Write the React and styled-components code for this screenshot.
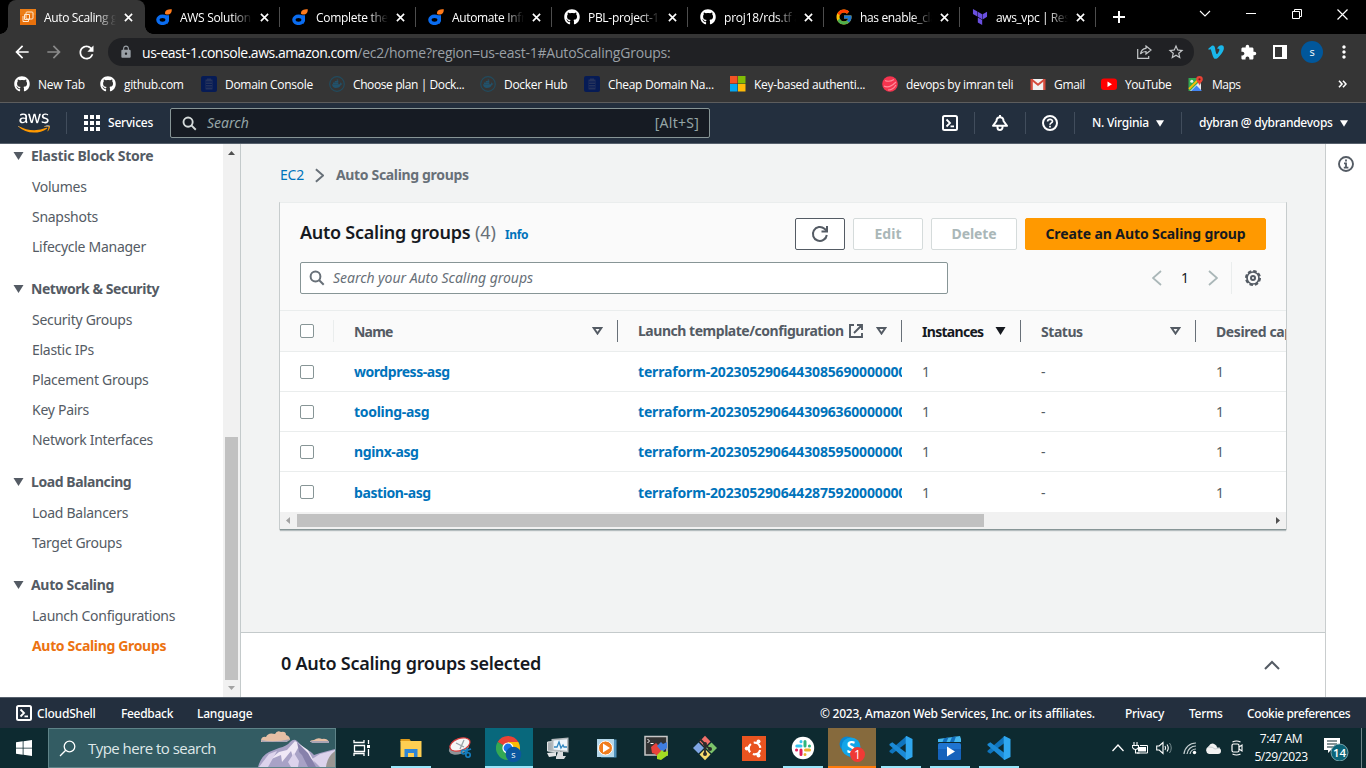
import React from "react";
import styled, { createGlobalStyle, css } from "styled-components";
import { FaGithub, FaVimeoV, FaDocker, FaAws } from "react-icons/fa";
import { FcGoogle } from "react-icons/fc";
import { SiTerraform } from "react-icons/si";
import { MdExtension, MdRefresh, MdArrowBack, MdArrowForward, MdLock, MdStarBorder, MdMoreVert } from "react-icons/md";

const ui = `"Open Sans", "Noto Sans", sans-serif`;
const ember = `"Noto Sans", "Open Sans", sans-serif`;

const GlobalStyle = createGlobalStyle`
  *, *::before, *::after { box-sizing: border-box; }
  body { margin: 0; background: #fff; overflow: hidden; }
  svg { display: block; flex: none; }
`;

const Screen = styled.div`
  width: 1366px;
  height: 768px;
  display: flex;
  flex-direction: column;
  overflow: hidden;
  font-family: ${ember};
  font-size: 14px;
`;

const Label = styled.span`
  white-space: nowrap;
  letter-spacing: ${(p) => p.$ls || 0}px;
  padding-bottom: ${(p) => p.$lift || 0}px;
`;

/* ---------- browser chrome ---------- */

const TabStrip = styled.div`
  height: 34px;
  flex: none;
  background: #000;
  padding-left: 8px;
  display: flex;
  font-family: ${ui};
  font-size: 12px;
  color: #fff;
`;

const Tab = styled.div`
  position: relative;
  width: ${(p) => (p.$active ? 137 : 136)}px;
  height: 34px;
  margin-right: ${(p) => (p.$active ? -1 : 0)}px;
  padding-left: 12px;
  display: flex;
  align-items: center;
  ${(p) =>
    p.$active &&
    css`
      background: #353535;
      border-radius: 8px 8px 0 0;
      &::before, &::after {
        content: "";
        position: absolute;
        bottom: 0;
        width: 8px;
        height: 8px;
      }
      &::before { left: -8px; background: radial-gradient(circle at 0 0, transparent 7.5px, #353535 8px); }
      &::after { right: -8px; background: radial-gradient(circle at 100% 0, transparent 7.5px, #353535 8px); }
    `}
`;

const TabTitle = styled.div`
  width: 72px;
  margin: 0 8px;
  overflow: hidden;
  white-space: nowrap;
  letter-spacing: ${(p) => p.$ls || 0}px;
  mask-image: linear-gradient(90deg, #000 72%, transparent 100%);
`;

const TabEdge = styled.i`
  width: 1px;
  height: 20px;
  margin-left: auto;
  background: #4d4d4d;
`;

const NewTab = styled.div`
  width: 45px;
  display: flex;
  align-items: center;
  justify-content: center;
`;

const WindowButtons = styled.div`
  margin-left: auto;
  height: 28px;
  display: flex;
  align-items: center;
  svg { margin: 0 15px; }
`;

const Toolbar = styled.div`
  height: 36px;
  flex: none;
  background: #353535;
  display: flex;
  align-items: center;
  padding: 0 6px;
  font-family: ${ui};
`;

const ToolSlot = styled.div`
  width: 32px;
  height: 32px;
  display: flex;
  align-items: center;
  justify-content: center;
  color: ${(p) => (p.$dim ? "#8a8a8a" : "#fff")};
`;

const AddressBar = styled.div`
  width: 1086px;
  height: 28px;
  margin: 0 6px;
  border-radius: 14px;
  background: #202124;
  display: flex;
  align-items: center;
  padding: 0 2px 0 11px;
  color: #fff;
  font-size: 14px;
`;

const Url = styled.div`
  flex: 1;
  margin-left: 9px;
  white-space: nowrap;
  span { color: #9aa0a6; letter-spacing: -0.22px; }
  b { font-weight: 400; letter-spacing: -0.46px; }
`;

const Avatar = styled.div`
  width: 22px;
  height: 22px;
  border-radius: 50%;
  background: #01579b;
  color: #fff;
  font: 11px/22px ${ui};
  text-align: center;
`;

const Bookmarks = styled.div`
  height: 33px;
  flex: none;
  background: #353535;
  border-bottom: 1px solid #5d5d5d;
  display: flex;
  align-items: flex-start;
  padding-left: 14px;
  font-family: ${ui};
  font-size: 12px;
  color: #fff;
`;

const Bookmark = styled.div`
  width: ${(p) => p.$w}px;
  height: 28px;
  display: flex;
  align-items: center;
  gap: 8px;
  letter-spacing: ${(p) => p.$ls}px;
  white-space: nowrap;
`;

/* ---------- console header ---------- */

const AwsBar = styled.header`
  height: 41px;
  flex: none;
  background: #232f3e;
  border-bottom: 1px solid #56606c;
  display: flex;
  align-items: center;
  padding-left: 18px;
  font-size: 12px;
  font-weight: 500;
  color: #fff;
`;

const LogoBox = styled.div`
  position: relative;
  width: 32px;
  height: 26px;
  svg { position: absolute; left: 0; top: 0; width: 32px; height: 26px; }
  svg:first-child { clip-path: inset(0 0 9.5px 0); }
  svg:last-child { clip-path: inset(16.5px 0 0 0); color: #f90; }
`;

const BarDivider = styled.i`
  width: 1px;
  height: 22px;
  background: #414d5c;
`;

const Services = styled.div`
  width: 103px;
  padding-left: 17px;
  display: flex;
  align-items: center;
  gap: 8px;
`;

const GlobalSearch = styled.div`
  width: 540px;
  height: 30px;
  border: 1px solid #879596;
  border-radius: 2px;
  background: #161b23;
  display: flex;
  align-items: center;
  padding: 0 10px 0 11px;
  font-weight: 400;
  font-size: 14px;
  color: #95a5a6;
  em { flex: 1; margin-left: 10px; padding-bottom: 2px; }
`;

const HeaderIcons = styled.div`
  margin-left: 215px;
  display: flex;
  align-items: center;
`;

const HeaderSlot = styled.div`
  width: ${(p) => p.$w}px;
  display: flex;
  justify-content: center;
`;

const HeaderMenu = styled.div`
  width: ${(p) => p.$w}px;
  padding-left: 17px;
  display: flex;
  align-items: center;
  gap: 7px;
`;

/* ---------- body ---------- */

const Body = styled.div`
  height: 553px;
  flex: none;
  display: flex;
`;

const Sidebar = styled.nav`
  width: 223px;
  color: #545b64;
  background: #fff;
`;

const NavGroup = styled.section`
  margin-bottom: 15px;
`;

const NavHeading = styled.div`
  height: 24px;
  margin-bottom: 4px;
  padding-left: 13px;
  display: flex;
  align-items: center;
  gap: 7px;
  font-weight: 700;
`;

const NavItem = styled.div`
  height: 30px;
  line-height: 30px;
  padding-left: 32px;
  white-space: nowrap;
  font-weight: ${(p) => (p.$active ? 700 : 400)};
  color: ${(p) => (p.$active ? "#ec7211" : "#545b64")};
  letter-spacing: ${(p) => (p.$active ? -0.33 : -0.28)}px;
`;

const VScroll = styled.div`
  width: 18px;
  border-right: 1px solid #c4cacb;
  background: #f1f1f1;
  display: flex;
  flex-direction: column;
  align-items: center;
  padding: 7px 0;
`;

const VThumb = styled.div`
  width: 13px;
  height: 243px;
  margin-top: auto;
  margin-bottom: 6px;
  background: #c1c1c1;
`;

const Main = styled.main`
  width: 1085px;
  display: flex;
  flex-direction: column;
  border-right: 1px solid #c9cdce;
  background: #f2f3f3;
`;

const Content = styled.div`
  height: 488px;
  padding: 17px 39px 0;
`;

const Crumbs = styled.div`
  height: 28px;
  display: flex;
  align-items: center;
  color: #687078;
  font-weight: 700;
  svg { margin: 0 12px 0 10px; }
  a { color: #0073bb; font-weight: 400; width: 25px; padding-bottom: 2px; letter-spacing: -0.2px; }
`;

const Card = styled.section`
  width: 1006px;
  height: 328px;
  margin-top: 13px;
  background: #fff;
  border-top: 1px solid #eaeded;
  border-bottom: 1px solid #879596;
  box-shadow: 0 1px 1px rgba(0, 28, 36, 0.25), 1px 0 0 #d0d5d6, -1px 0 0 #d0d5d6;
  overflow: hidden;
`;

const CardHead = styled.div`
  height: 107px;
  padding: 15px 20px 0;
  background: #fafafa;
`;

const HeadRow = styled.div`
  display: flex;
  align-items: center;
  height: 32px;
  margin-bottom: 12px;
`;

const Title = styled.h1`
  margin: 0 5px 4px 0;
  width: 170px;
  white-space: nowrap;
  font-size: 18px;
  font-weight: 600;
  color: #16191f;
  letter-spacing: -0.26px;
`;

const Count = styled.span`
  width: 30px;
  margin-bottom: 4px;
  font-size: 18px;
  color: #687078;
  letter-spacing: -0.1px;
`;

const InfoLink = styled.a`
  flex: 1;
  font-size: 12px;
  font-weight: 700;
  color: #0073bb;
  letter-spacing: -0.35px;
`;

const Button = styled.button`
  width: ${(p) => p.$w}px;
  height: 32px;
  margin-left: 8px;
  padding: 0 0 2px;
  display: flex;
  align-items: center;
  justify-content: center;
  border: 1px solid ${(p) => (p.$primary ? "#f90" : p.disabled ? "#d5dbdb" : "#545b64")};
  border-radius: 2px;
  background: ${(p) => (p.$primary ? "#f90" : "#fff")};
  color: ${(p) => (p.$primary ? "#16191f" : p.disabled ? "#aab7b8" : "#545b64")};
  font: 700 14px ${ember};
  letter-spacing: ${(p) => p.$ls || 0}px;
  white-space: nowrap;
  svg { margin-top: 2px; }
`;

const FilterBox = styled.div`
  width: 648px;
  height: 32px;
  padding-left: 8px;
  display: flex;
  align-items: center;
  gap: 8px;
  border: 1px solid #879596;
  border-radius: 2px;
  background: #fff;
  color: #687078;
  font-style: italic;
`;

const Pager = styled.div`
  margin-left: auto;
  height: 32px;
  width: 114px;
  display: flex;
  align-items: center;
  color: #16191f;
  span { width: 46px; text-align: center; padding-bottom: 1px; }
`;

const GearSlot = styled.div`
  margin-left: 13px;
  padding-left: 13px;
  height: 32px;
  border-left: 1px solid #eaeded;
  display: flex;
  align-items: center;
`;

const columns = "54px 284px 284px 119px 175px 190px";

const HeaderLine = styled.div`
  height: 42px;
  display: grid;
  grid-template-columns: ${columns};
  align-items: center;
  border-top: 1px solid #eaeded;
  border-bottom: 1px solid #eaeded;
  background: #fafafa;
  color: #545b64;
  font-weight: 700;
`;

const HeadCell = styled.div`
  height: 22px;
  padding: 0 14px 0 20px;
  display: flex;
  align-items: center;
  border-right: 1px solid ${(p) => (p.$light ? "#eaeded" : "#687078")};
  color: ${(p) => (p.$sorted ? "#16191f" : "#545b64")};
  white-space: nowrap;
  > svg:last-child { margin-left: auto; }
  > svg:nth-last-child(2) { margin-left: 5px; }
`;

const Row = styled.div`
  height: 40px;
  display: grid;
  grid-template-columns: ${columns};
  align-items: center;
  border-bottom: ${(p) => (p.$last ? 0 : 1)}px solid #eaeded;
  color: #545b64;
`;

const Cell = styled.div`
  padding-left: 20px;
  overflow: hidden;
  white-space: nowrap;
  ${(p) => p.$link && css`color: #0073bb; font-weight: 700; letter-spacing: ${p.$ls}px;`}
`;

const Check = styled.span`
  display: block;
  width: 14px;
  height: 14px;
  border: 1px solid #879596;
  border-radius: 2px;
  background: #fff;
`;

const HScroll = styled.div`
  height: 17px;
  padding: 0 6px;
  background: #f1f1f1;
  display: flex;
  align-items: center;
`;

const HThumb = styled.div`
  width: 687px;
  height: 13px;
  margin-left: 7px;
  margin-right: auto;
  background: #c1c1c1;
`;

const SplitPanel = styled.div`
  height: 65px;
  border-top: 1px solid #c4cacb;
  background: #fff;
  display: flex;
  align-items: center;
  justify-content: space-between;
  padding: 0 45px 0 40px;
  font-size: 18px;
  font-weight: 600;
  color: #16191f;
`;

const Rail = styled.aside`
  width: 40px;
  padding: 12px 0 0 12px;
  background: #fff;
`;

const Footer = styled.footer`
  height: 31px;
  flex: none;
  background: #232f3e;
  border-top: 1px solid #56606c;
  display: flex;
  align-items: center;
  padding: 0 0 0 16px;
  font-size: 12px;
  font-weight: 500;
  color: #fff;
`;

const FooterItem = styled.span`
  width: ${(p) => p.$w}px;
  margin-left: ${(p) => p.$push || 0}px;
  white-space: nowrap;
  letter-spacing: ${(p) => p.$ls || 0}px;
`;

/* ---------- taskbar ---------- */

const Taskbar = styled.div`
  height: 40px;
  flex: none;
  background: #0d2a30;
  display: flex;
  align-items: stretch;
  font-family: ${ui};
  color: #fff;
`;

const StartSlot = styled.div`
  width: 48px;
  display: flex;
  align-items: center;
  justify-content: center;
`;

const TaskSearch = styled.div`
  width: 288px;
  border: 1px solid #5e8388;
  background: #335c63;
  display: flex;
  align-items: center;
  padding-left: 10px;
  font-size: 15px;
  color: #dfe8e9;
  overflow: hidden;
  span { width: 160px; margin-left: 12px; white-space: nowrap; letter-spacing: -0.53px; }
`;

const TaskItem = styled.div`
  width: 49px;
  display: flex;
  flex-direction: column;
  align-items: center;
  padding-top: 7px;
  svg { margin-bottom: auto; }
  ${(p) => p.$bg && css`background: linear-gradient(90deg, transparent 0, transparent 1px, ${p.$bg} 1px);`}
`;

const Running = styled.i`
  width: ${(p) => p.$w || 40}px;
  height: 2px;
  background: ${(p) => p.$color || "#99e6fa"};
`;

const Tray = styled.div`
  margin-left: auto;
  display: flex;
  align-items: center;
`;

const Clock = styled.div`
  width: 68px;
  font-size: 12px;
  line-height: 18px;
  text-align: center;
  letter-spacing: -0.4px;
  white-space: nowrap;
`;

/* ---------- drawings ---------- */

const Svg = ({ w = 16, h = w, vb, children, ...rest }) => (
  <svg width={w} height={h} viewBox={vb || `0 0 ${w} ${h}`} fill="none" {...rest}>{children}</svg>
);

const Ec2Icon = () => (
  <Svg>
    <rect width="16" height="16" fill="#e8710c" />
    <rect width="16" height="6" fill="#f08a20" opacity=".5" />
    <rect x="6" y="3" width="7" height="7" rx="1" stroke="#ffe9d0" />
    <path d="M4.500 5.500h5v5h-5zM3 7v5.500h5.500V11" stroke="#ffe9d0" />
  </Svg>
);
const DIcon = () => (
  <Svg>
    <ellipse cx="6.500" cy="10.800" rx="4.600" ry="3.600" stroke="#0a6cf0" strokeWidth="3.400" />
    <path d="M9.300 6.300h3.700v5a6 6 0 0 1-2 4z" fill="#0a6cf0" />
    <path d="M9 4.500C9 1.500 11 .300 15.800.300c0 4-1.600 5.300-4.500 5.200C10 5.500 9 5.300 9 4.500z" fill="#ff7a1a" />
  </Svg>
);
const CloseX = ({ s = 9, width = 1.8 }) => (
  <Svg w={s} vb="0 0 10 10"><path d="M1 1l8 8M9 1L1 9" stroke="#fff" strokeWidth={width} /></Svg>
);
const DomainIcon = () => (
  <Svg>
    <rect width="16" height="16" rx="2" fill="#061b55" />
    <path d="M6 2.500h4v1h1.500v10h-7v-10H6z" fill="#25335c" />
    <path d="M5 6h6M5 8.500h6M5 11h6" stroke="#061b55" />
  </Svg>
);
const DockerIcon = () => (
  <Svg>
    <circle cx="8" cy="8" r="7.300" stroke="#224b5e" strokeWidth="1.200" />
    <path d="M3 8.300h7.800q.7-1 .3-2 .9.300 1.100 1.100 1-.1 1.300.4-.5.900-1.600.9Q10.700 12 7 12 3.300 12 3 8.300zM4 6.500h5.300v1.400H4zM5.800 5h3.500v1.200H5.800zM7.700 3.500h1.500v1.300H7.700z" fill="#22526b" />
  </Svg>
);
const MsIcon = () => (
  <Svg>
    <path d="M0 0h7.500v7.500H0z" fill="#f35325" /><path d="M8 0h7.500v7.500H8z" fill="#81bc06" />
    <path d="M0 8h7.500v7.500H0z" fill="#05a6f0" /><path d="M8 8h7.500v7.500H8z" fill="#ffba08" />
  </Svg>
);
const BallIcon = () => (
  <Svg>
    <circle cx="8" cy="8" r="7.800" fill="#f5344f" />
    <path d="M3 4.500q4 2 9-1M2 10q5 3 12-4M6 14q5 0 8-5" stroke="#ff8a99" strokeWidth="1.100" />
  </Svg>
);
const GmailIcon = () => (
  <Svg>
    <rect x="1" y="3" width="14" height="11" fill="#f2f2f2" />
    <path d="M.500 3h2.300v11H.500zM13.200 3h2.300v11h-2.300z" fill="#d54b3d" />
    <path d="M1.500 3.500L8 8.800l6.500-5.300" stroke="#d54b3d" strokeWidth="2" />
  </Svg>
);
const YtIcon = () => (
  <Svg><rect y="2.500" width="16" height="11.500" rx="3" fill="#f00" /><path d="M6.500 5.500v5.500l4.500-2.700z" fill="#fff" /></Svg>
);
const MapsIcon = () => (
  <Svg>
    <path d="M.500 2h12v13H.500z" fill="#34a853" />
    <path d="M2 15L12 5l1 4v6z" fill="#e8eaed" />
    <path d="M3 15l5.500-5.500L14 15z" fill="#4285f4" />
    <path d="M1 13L10.500 3.500" stroke="#fbbc04" strokeWidth="1.800" />
    <circle cx="3.800" cy="5.200" r="1.500" fill="#e8f5ea" />
    <path d="M11.500 0a3.300 3.300 0 0 1 3.300 3.300c0 2.700-3.300 4-3.300 6.700 0-2.700-3.300-4-3.300-6.700A3.300 3.300 0 0 1 11.500 0z" fill="#ea4335" />
    <circle cx="11.500" cy="3.300" r="1.100" fill="#7b1b14" />
  </Svg>
);
const Magnifier = ({ s = 16, color, width = 2 }) => (
  <Svg w={s} vb="0 0 16 16"><circle cx="6.500" cy="6.500" r="4.900" stroke={color} strokeWidth={width} /><path d="M10 10l4.700 4.700" stroke={color} strokeWidth={width} /></Svg>
);
const ShellIcon = () => (
  <Svg><rect x="1" y="1" width="14" height="14" rx="1.500" stroke="#fff" strokeWidth="2" /><path d="M4.500 4.500L8 8l-3.500 3.500M8.500 11.300h3.500" stroke="#fff" strokeWidth="1.800" /></Svg>
);
const BellIcon = () => (
  <Svg><path d="M8 0v2.500M8 2.200c2.600 0 3.500 1.800 3.500 3.800L15 10.800H1L4.500 6c0-2 .9-3.800 3.500-3.800z" stroke="#fff" strokeWidth="2" strokeLinejoin="round" /><path d="M5.500 11v1.500a2.500 2.500 0 0 0 5 0V11" stroke="#fff" strokeWidth="2" /></Svg>
);
const HelpIcon = () => (
  <Svg><circle cx="8" cy="8" r="7" stroke="#fff" strokeWidth="2" /><path d="M5.600 6.500C5.600 3.500 10.500 3.700 10.500 6.300 10.500 8 8 7.800 8 9.800M8 10.700v1.700" stroke="#fff" strokeWidth="1.700" /></Svg>
);
const CaretDown = ({ w = 8, h = 7, color = "#fff" }) => (
  <Svg w={w} h={h} vb="0 0 10 8"><path d="M0 0h10L5 8z" fill={color} /></Svg>
);
const SortIcon = () => (
  <Svg w={11} h={8} vb="0 0 11 8"><path d="M1.700 1h7.600L5.500 6.600z" stroke="#545b64" strokeWidth="1.900" /></Svg>
);
const Chevron = ({ dir, w, h, color, width = 2 }) => {
  const d = { right: "M1 1l8 7-8 7", left: "M9 1L1 8l8 7", up: "M1 9l7-7 7 7" }[dir];
  return <Svg w={w} h={h} vb={dir === "up" ? "0 0 16 10" : "0 0 10 16"}><path d={d} stroke={color} strokeWidth={width} /></Svg>;
};
const ExternalIcon = () => (
  <Svg w={14} vb="0 0 14 14"><path d="M5 1H1v12h12V9M8 1h5v5M13 1L5 9" stroke="#545b64" strokeWidth="1.900" /></Svg>
);
const ReloadIcon = () => (
  <Svg w={18} vb="0 0 18 18"><path d="M15.800 10A7 7 0 1 1 13.500 3.700L16 6" stroke="#545b64" strokeWidth="2" /><path d="M16 1v5.500h-5.500" stroke="#545b64" strokeWidth="2" /></Svg>
);
const GearIcon = () => (
  <Svg>
    <circle cx="8" cy="8" r="7" stroke="#545b64" strokeWidth="2" strokeDasharray="3.500 2" />
    <circle cx="8" cy="8" r="6" stroke="#545b64" strokeWidth="1.700" />
    <circle cx="8" cy="8" r="2" stroke="#545b64" strokeWidth="2" />
  </Svg>
);
const InfoIcon = () => (
  <Svg><circle cx="8" cy="8" r="7" stroke="#545b64" strokeWidth="1.900" /><path d="M8 3.500v2M6 7.300h2v4M5.800 11.600h4.600" stroke="#545b64" strokeWidth="1.800" /></Svg>
);
const ScrollArrow = ({ d, w, h, color }) => <Svg w={w} h={h}><path d={d} fill={color} /></Svg>;

const Mountains = () => (
  <Svg w={77} h={38} style={{ marginLeft: 17, flex: "none" }}>
    <path d="M3 11q1-4 5-3 2-5 9-3 2-4 6-2 5-1 5 3 4 1 4 5-4 2-29 2zM52 13q0-2 4-2 4-3 8-1 5-1 7 3z" fill="#e6bfa5" />
    <path d="M3 11q14 3 29-1l-3 3H4zM52 12h19v2H54z" fill="#a9a5b4" />
    <path d="M0 38Q3 27 11 23l10-4q8-2 11-6 4-4 7-1l8 8q6 2 9 6l6-2 15-4v18z" fill="#a8a2c6" />
    <path d="M37 12l-8 9-8 2-10 8 12-5 1 7 9-11 2 6 5-9 8 5 9 10-7-13z" fill="#efe8f6" />
    <path d="M39 13l11 11 8 14h-8l-6-12-3-3z" fill="#8781ab" />
    <path d="M11 25l8-3-9 16H1zM36 24l5 8-1 6h-7l-3-5zM54 30l8-5 15-4v17H62z" fill="#dcd3ec" />
    <path d="M77 22q-8 6-9 16h9z" fill="#9a9693" />
  </Svg>
);
const Cloudy = () => (
  <Svg w={16} h={11}><path d="M4 11a4 4 0 0 1-.5-7.500Q6-1 10 1.500q2 1 2 3 4 0 4 3.500 0 3-3 3z" fill="#f2f2f2" /><path d="M3 4q5-.5 7 2l5-1" stroke="#c7cdd0" /></Svg>
);

const FolderIcon = () => (
  <Svg w={24} h={26}>
    <path d="M1.500 4h9l2 3h-11z" fill="#e09b1a" /><rect x="1.500" y="6" width="21" height="16" fill="#ffcf52" />
    <path d="M5.500 22v-8h13v8h-3.500v-4h-6v4z" fill="#2f86d6" />
  </Svg>
);
const SnipIcon = () => (
  <Svg w={24} h={26}>
    <ellipse cx="11" cy="13" rx="10.500" ry="6" fill="#8e9499" transform="rotate(-20 11 13)" />
    <ellipse cx="12" cy="9.500" rx="10.500" ry="6" fill="#f6f6f6" stroke="#d83a3a" strokeWidth="1.200" transform="rotate(-20 12 9.500)" />
    <path d="M8 8l8 4M16 5l-4 9" stroke="#9aa2a8" strokeWidth="1.300" />
    <circle cx="15.500" cy="17" r="2" stroke="#1681c4" strokeWidth="1.600" /><circle cx="20" cy="20" r="2.200" stroke="#1681c4" strokeWidth="1.600" />
    <path d="M17 16l6-2M19 18v-5" stroke="#1681c4" strokeWidth="1.600" />
  </Svg>
);
const ChromeIcon = () => (
  <Svg w={26} h={28}>
    <path d="M12 13L1.600 7A12 12 0 0 1 22.400 7z" fill="#e94235" />
    <path d="M12 13L1.600 7A12 12 0 0 0 12 25z" fill="#34a853" />
    <path d="M12 13h12a12 12 0 0 1-12 12z" fill="#fbbc05" /><path d="M12 13V7h10.400a12 12 0 0 1 1.600 6z" fill="#fbbc05" />
    <circle cx="12" cy="13" r="5.600" fill="#fff" /><circle cx="12" cy="13" r="4.400" fill="#1a73e8" />
    <circle cx="17.500" cy="19.500" r="7.800" fill="#0b57a0" />
    <text x="17.500" y="22.500" textAnchor="middle" fontSize="9" fontFamily="Open Sans" fill="#fff">s</text>
  </Svg>
);
const MonitorIcon = () => (
  <Svg w={24} h={26}>
    <path d="M1.500 7l12-1v11l-12-1z" fill="#a9b0b4" stroke="#dfe3e5" /><path d="M5.500 4L22.500 2.500v15L5.500 16z" fill="#b4babd" />
    <path d="M7.500 5.500L21 4.200v11.600L7.500 14.500z" fill="#eef6fb" /><path d="M8 12h3l2-5 2 6 2-3 1 2h3" stroke="#2f86c0" strokeWidth="1.300" />
    <path d="M12 17h5v4h3l-2 3h-8v-2z" fill="#d9dcde" /><path d="M1 18l9-1v4l-7 1z" fill="#e4e6e7" />
  </Svg>
);
const PlayerIcon = () => (
  <Svg w={24} h={26}>
    <rect x="6" y="4.500" width="15.500" height="18" fill="#4d8fb9" /><rect x="2" y="4" width="17" height="18" fill="#b4d8ea" />
    <circle cx="10.500" cy="13" r="7" fill="#f07d1d" stroke="#fff" /><path d="M8 8.500v9l7-4.500z" fill="#fff" />
  </Svg>
);
const TermIcon = () => (
  <Svg w={26} h={26}>
    <rect x="2" y="1.500" width="22" height="18.500" fill="#333" stroke="#c8c8c8" strokeWidth="1.500" /><path d="M4.500 4l2 2-2 2M7.500 8.500h3" stroke="#fff" />
    <path d="M8 12l5-4 4 4 3 4-5 6-3-3-3-1z" fill="#e8423b" /><path d="M14 11l4-4 2 2 4-2v6l-5 4z" fill="#3f7de0" />
    <path d="M14 20l5-5 2 2 4-1v4l-7 5-4-1z" fill="#a4dc22" />
  </Svg>
);
const GitIcon = () => (
  <Svg w={26} h={26}>
    <path d="M13 .8l5.500 5.700L13 12 7.500 6.500z" fill="#f0706a" /><path d="M6.500 7.500L12 13l-5.500 5.500L1 13z" fill="#7fa6e4" />
    <path d="M19.500 7.500L25 13l-5.500 5.500L14 13z" fill="#7cc46b" /><path d="M13 14l5.500 5.500L13 25.200l-5.500-5.700z" fill="#f7dc6e" />
    <path d="M8 4l5 5v11M13 10l5 4" stroke="#2b2b2b" strokeWidth="1.800" />
    <circle cx="13" cy="9" r="2" fill="#2b2b2b" /><circle cx="13" cy="19" r="2" fill="#2b2b2b" /><circle cx="18" cy="14" r="2" fill="#2b2b2b" />
  </Svg>
);
const UbuntuIcon = () => (
  <Svg w={24} h={26}>
    <rect y="1" width="24" height="25" fill="#e95420" /><circle cx="12.500" cy="13.500" r="5.800" stroke="#fff" strokeWidth="2.200" strokeDasharray="9.100 3.050" strokeDashoffset="-1.500" />
    <circle cx="16.500" cy="6.500" r="2" fill="#fff" /><circle cx="4.800" cy="13.500" r="2" fill="#fff" /><circle cx="16.500" cy="20.500" r="2" fill="#fff" />
  </Svg>
);
const SlackIcon = () => (
  <Svg w={24} h={26}>
    <circle cx="12" cy="13" r="11.200" fill="#fff" />
    <g strokeWidth="3" strokeLinecap="round">
      <path d="M10 6.500v.2M5.800 11H10" stroke="#36c5f0" />
      <path d="M14 6.500v4.500M18.400 11h.1" stroke="#2eb67d" /><path d="M14 19.500v-.1M14.500 15h4" stroke="#ecb22e" />
      <path d="M10 15v4.500M5.500 15h.1" stroke="#e01e5a" />
    </g>
  </Svg>
);
const SkypeIcon = () => (
  <Svg w={26} h={28}>
    <circle cx="8" cy="9" r="7.500" fill="#0a86cf" /><circle cx="15" cy="16" r="7.500" fill="#0a86cf" /><circle cx="12" cy="12" r="9.500" fill="#12a5e8" />
    <text x="12" y="18" textAnchor="middle" fontSize="16" fontWeight="700" fontFamily="Open Sans" fill="#fff">S</text>
    <circle cx="18.500" cy="19.500" r="7.500" fill="#f03a35" />
    <text x="18.500" y="24" textAnchor="middle" fontSize="12" fontFamily="Open Sans" fill="#fff">1</text>
  </Svg>
);
const CodeIcon = () => (
  <Svg w={24} h={26}>
    <path d="M17.500 1v7L3.300 18.800.5 17v-1.300z" fill="#0f74bd" />
    <path d="M.5 10.300V9l2.800-1.800L17.500 18v7z" fill="#1b8ad6" />
    <path d="M17.500 1L23.500 4v18l-6 3q-.8 0-.8-1V2q0-1 .8-1z" fill="#2fa7ef" />
  </Svg>
);
const ClapperIcon = () => (
  <Svg w={25} h={26}>
    <rect x="1" y="8" width="23" height="17" rx="1.500" fill="#1f74d0" /><path d="M1 14h23v9.500q0 1.500-1.500 1.500h-20Q1 25 1 23.500z" fill="#0b4fa5" opacity=".5" />
    <path d="M1 4l22-3 1 3v3H1z" fill="#46b8ee" /><path d="M7 3.300L5.500 7h4l2-4.500zM15 2l-2 5h4l2-5.500z" fill="#146fbd" />
    <path d="M10 11.500v10l8-5z" fill="#fff" />
  </Svg>
);

/* ---------- data ---------- */

const tabs = [
  [<Ec2Icon />, "Auto Scaling groups", -0.35],
  [<DIcon />, "AWS Solution fo", -0.3],
  [<DIcon />, "Complete the in", -0.3],
  [<DIcon />, "Automate Infras", -0.35],
  [<FaGithub size={16} />, "PBL-project-18", -0.3],
  [<FaGithub size={16} />, "proj18/rds.tf at", -0.2],
  [<FcGoogle size={18} style={{ margin: "0 -1px" }} />, "has enable_class", -0.35],
  [<SiTerraform size={16} color="#6a4fe0" />, "aws_vpc | Resou", -0.4],
];

const bookmarks = [
  [<FaGithub size={16} />, "New Tab", 86, -0.3],
  [<FaGithub size={16} />, "github.com", 101, -0.35],
  [<DomainIcon />, "Domain Console", 128, -0.3],
  [<DockerIcon />, "Choose plan | Dock...", 151, -0.4],
  [<DockerIcon />, "Docker Hub", 104, -0.3],
  [<DomainIcon />, "Cheap Domain Na...", 146, -0.3],
  [<MsIcon />, "Key-based authenti...", 152, -0.3],
  [<BallIcon />, "devops by imran teli", 148, -0.3],
  [<GmailIcon />, "Gmail", 71, -0.3],
  [<YtIcon />, "YouTube", 87, -0.45],
  [<MapsIcon />, "Maps", 150, -0.5],
];

const nav = [
  ["Elastic Block Store", -0.25, ["Volumes", "Snapshots", "Lifecycle Manager"]],
  ["Network & Security", -0.45, ["Security Groups", "Elastic IPs", "Placement Groups", "Key Pairs", "Network Interfaces"]],
  ["Load Balancing", -0.42, ["Load Balancers", "Target Groups"]],
  ["Auto Scaling", -0.33, ["Launch Configurations", "Auto Scaling Groups"]],
];

const groups = [
  ["wordpress-asg", "terraform-20230529064430856900000001", -0.45],
  ["tooling-asg", "terraform-20230529064430963600000003", -0.3],
  ["nginx-asg", "terraform-20230529064430859500000002", -0.4],
  ["bastion-asg", "terraform-20230529064428759200000001", -0.4],
];

export default function App() {
  return (
    <Screen>
      <GlobalStyle />
      <TabStrip>
        {tabs.map(([icon, title, ls], i) => (
          <Tab key={title} $active={i === 0}>
            {icon}
            <TabTitle $ls={ls}>{title}</TabTitle>
            <CloseX />
            {i > 0 && <TabEdge />}
          </Tab>
        ))}
        <NewTab><Svg w={12}><path d="M6 0v12M0 6h12" stroke="#fff" strokeWidth="2" /></Svg></NewTab>
        <WindowButtons>
          <Svg w={12} h={8} style={{ marginRight: 18 }}><path d="M1 1l5 5 5-5" stroke="#fff" strokeWidth="1.100" /></Svg>
          <Svg w={10} h={2} style={{ marginLeft: 17 }}><path d="M0 .5h10" stroke="#fff" /></Svg>
          <Svg w={10} style={{ marginLeft: 21, marginRight: 20 }}><path d="M.5 2.500h7v7h-7zM2.500 2.500v-2h7v7h-2" stroke="#fff" /></Svg>
          <Svg w={11} style={{ marginRight: 18 }}><path d="M.5.5l10 10M10.500.5l-10 10" stroke="#fff" strokeWidth="1.200" /></Svg>
        </WindowButtons>
      </TabStrip>
      <Toolbar>
        <ToolSlot><MdArrowBack size={20} /></ToolSlot>
        <ToolSlot $dim><MdArrowForward size={20} /></ToolSlot>
        <ToolSlot><MdRefresh size={21} /></ToolSlot>
        <AddressBar>
          <MdLock size={14} color="#9aa0a6" />
          <Url><b>us-east-1.console.aws.amazon.com</b><span>/ec2/home?region=us-east-1#AutoScalingGroups:</span></Url>
          <ToolSlot>
            <Svg w={15} h={14}><path d="M.7 4v9.300h11V11" stroke="#c4c7c9" strokeWidth="1.200" /><path d="M9 1l5 4-5 4V6.500C6.500 6.500 5 7 3.500 9 4 5.500 6 3.500 9 3.300z" stroke="#c4c7c9" strokeWidth="1.200" /></Svg>
          </ToolSlot>
          <ToolSlot><MdStarBorder size={18} color="#c4c7c9" /></ToolSlot>
        </AddressBar>
        <ToolSlot><FaVimeoV size={18} color="#1ab7ea" /></ToolSlot>
        <ToolSlot><MdExtension size={17} /></ToolSlot>
        <ToolSlot><Svg w={14}><path d="M1 1h12v12H1z" stroke="#fff" strokeWidth="2" /><path d="M9 1h4v12H9z" fill="#fff" /></Svg></ToolSlot>
        <ToolSlot><Avatar>s</Avatar></ToolSlot>
        <ToolSlot><MdMoreVert size={20} /></ToolSlot>
      </Toolbar>
      <Bookmarks>
        {bookmarks.map(([icon, text, w, ls]) => (
          <Bookmark key={text} $w={w} $ls={ls}>{icon}<span>{text}</span></Bookmark>
        ))}
        <Bookmark><Svg w={9} h={8}><path d="M1 .8L4 4 1 7.200M5 .8L8 4 5 7.200" stroke="#fff" strokeWidth="1.600" /></Svg></Bookmark>
      </Bookmarks>

      <AwsBar>
        <LogoBox><FaAws /><FaAws /></LogoBox>
        <BarDivider style={{ marginLeft: 16 }} />
        <Services>
          <Svg>{[0, 6, 12].map((y) => [0, 6, 12].map((x) => <rect key={`${x}-${y}`} x={x} y={y} width="4" height="4" fill="#fff" />))}</Svg>
          <Label $ls={-0.2} $lift={1}>Services</Label>
        </Services>
        <GlobalSearch>
          <Magnifier s={15} color="#d5dbdb" />
          <em>Search</em>
          <Label $ls={0.25} $lift={2}>[Alt+S]</Label>
        </GlobalSearch>
        <HeaderIcons>
          <HeaderSlot $w={49}><ShellIcon /></HeaderSlot>
          <BarDivider />
          <HeaderSlot $w={50}><BellIcon /></HeaderSlot>
          <BarDivider />
          <HeaderSlot $w={48}><HelpIcon /></HeaderSlot>
          <BarDivider />
          <HeaderMenu $w={106}><Label $ls={-0.25} $lift={1}>N. Virginia</Label><CaretDown /></HeaderMenu>
          <BarDivider />
          <HeaderMenu $w={180}><Label $ls={-0.25} $lift={1}>dybran @ dybrandevops</Label><CaretDown /></HeaderMenu>
        </HeaderIcons>
      </AwsBar>

      <Body>
        <Sidebar>
          {nav.map(([heading, ls, items]) => (
            <NavGroup key={heading}>
              <NavHeading><CaretDown w={11} h={8} color="#545b64" /><Label $ls={ls} $lift={2}>{heading}</Label></NavHeading>
              {items.map((item) => <NavItem key={item} $active={item === "Auto Scaling Groups"}>{item}</NavItem>)}
            </NavGroup>
          ))}
        </Sidebar>
        <VScroll>
          <ScrollArrow w={7} h={4} d="M0 4L3.500 0 7 4z" color="#505050" />
          <VThumb />
          <ScrollArrow w={7} h={4} d="M0 0l3.500 4L7 0z" color="#a3a3a3" />
        </VScroll>
        <Main>
          <Content>
            <Crumbs><a>EC2</a><Chevron dir="right" w={9} h={15} color="#687078" width={2.200} /><Label $ls={-0.34} $lift={2}>Auto Scaling groups</Label></Crumbs>
            <Card>
              <CardHead>
                <HeadRow>
                  <Title>Auto Scaling groups</Title>
                  <Count>(4)</Count>
                  <InfoLink>Info</InfoLink>
                  <Button $w={50}><ReloadIcon /></Button>
                  <Button $w={70} disabled>Edit</Button>
                  <Button $w={86} disabled $ls={-0.1}>Delete</Button>
                  <Button $w={241} $primary $ls={-0.1}>Create an Auto Scaling group</Button>
                </HeadRow>
                <HeadRow>
                  <FilterBox><Magnifier s={16} color="#687078" /><Label $ls={-0.04} $lift={2}>Search your Auto Scaling groups</Label></FilterBox>
                  <Pager>
                    <Chevron dir="left" w={10} h={16} color="#aab7b8" width={1.800} />
                    <span>1</span>
                    <Chevron dir="right" w={10} h={16} color="#aab7b8" width={1.800} />
                    <GearSlot><GearIcon /></GearSlot>
                  </Pager>
                </HeadRow>
              </CardHead>
              <HeaderLine>
                <HeadCell $light><Check /></HeadCell>
                <HeadCell><Label $ls={-0.8}>Name</Label><SortIcon /></HeadCell>
                <HeadCell><Label $ls={-0.47} $lift={2}>Launch template/configuration</Label><ExternalIcon /><SortIcon /></HeadCell>
                <HeadCell $sorted><Label $ls={-0.7}>Instances</Label><CaretDown w={11} h={8} color="#16191f" /></HeadCell>
                <HeadCell><Label $ls={-0.45}>Status</Label><SortIcon /></HeadCell>
                <Cell><Label $ls={-0.4}>Desired capacity</Label></Cell>
              </HeaderLine>
              {groups.map(([name, template, ls], i) => (
                <Row key={name} $last={i === groups.length - 1}>
                  <Cell><Check /></Cell>
                  <Cell $link $ls={ls}>{name}</Cell>
                  <Cell $link $ls={-0.16}>{template}</Cell>
                  <Cell>1</Cell>
                  <Cell>-</Cell>
                  <Cell>1</Cell>
                </Row>
              ))}
              <HScroll>
                <ScrollArrow w={4} h={7} d="M4 0L0 3.500 4 7z" color="#a3a3a3" />
                <HThumb />
                <ScrollArrow w={4} h={7} d="M0 0l4 3.500L0 7z" color="#505050" />
              </HScroll>
            </Card>
          </Content>
          <SplitPanel>
            <Label $ls={-0.27} $lift={4}>0 Auto Scaling groups selected</Label>
            <Chevron dir="up" w={16} h={10} color="#545b64" />
          </SplitPanel>
        </Main>
        <Rail><InfoIcon /></Rail>
      </Body>

      <Footer>
        <ShellIcon />
        <FooterItem $push={5} $w={84} $ls={-0.2}>CloudShell</FooterItem>
        <FooterItem $w={76} $ls={-0.3}>Feedback</FooterItem>
        <FooterItem $w={623} $ls={-0.2}>Language</FooterItem>
        <FooterItem $w={305} $ls={-0.24}>© 2023, Amazon Web Services, Inc. or its affiliates.</FooterItem>
        <FooterItem $w={64} $ls={-0.3}>Privacy</FooterItem>
        <FooterItem $w={58} $ls={-0.3}>Terms</FooterItem>
        <FooterItem $w={110} $ls={-0.4}>Cookie preferences</FooterItem>
      </Footer>

      <Taskbar>
        <StartSlot><Svg><path d="M0 2.300L6.700 1.300v6.400H0zM7.500 1.200L16 0v7.700H7.500zM0 8.500h6.700v6.300L0 13.800zM7.500 8.500H16V16l-8.500-1.200z" fill="#fff" /></Svg></StartSlot>
        <TaskSearch>
          <Svg w={17}><circle cx="10.500" cy="6.500" r="5.300" stroke="#fff" strokeWidth="1.300" /><path d="M6.700 10.300L1 16" stroke="#fff" strokeWidth="1.300" /></Svg>
          <span>Type here to search</span>
          <Mountains />
        </TaskSearch>
        <TaskItem style={{ width: 50, paddingTop: 12 }}>
          <Svg w={17}><path d="M1 0v2.500h10V0M1.500 5.500h10v6h-10zM1 16v-2.500h10V16M15.500 0v4M15.500 9v7" stroke="#fff" strokeWidth="1.300" /><rect x="14" y="5" width="3" height="3" fill="#fff" /></Svg>
        </TaskItem>
        <TaskItem><FolderIcon /><Running /></TaskItem>
        <TaskItem><SnipIcon /></TaskItem>
        <TaskItem $bg="#08687c"><ChromeIcon /><Running $w={48} /></TaskItem>
        <TaskItem><MonitorIcon /></TaskItem>
        <TaskItem><PlayerIcon /></TaskItem>
        <TaskItem><TermIcon /></TaskItem>
        <TaskItem><GitIcon /></TaskItem>
        <TaskItem><UbuntuIcon /></TaskItem>
        <TaskItem><SlackIcon /><Running /></TaskItem>
        <TaskItem $bg="#866a3d"><SkypeIcon /><Running $w={48} $color="#ff7a0a" /></TaskItem>
        <TaskItem><CodeIcon /><Running /></TaskItem>
        <TaskItem><ClapperIcon /><Running /></TaskItem>
        <TaskItem><CodeIcon /><Running /></TaskItem>
        <Tray>
          <Svg w={12} h={8} style={{ marginRight: 8 }}><path d="M.5 7L6 1l5.500 6" stroke="#fff" strokeWidth="1.300" /></Svg>
          <Svg w={17} h={12} style={{ marginRight: 7 }}><path d="M2 0v3M5 0v3M0 3.500h6.500v2q-1 2-3 2t-3-2zM3.500 7v4h4" stroke="#fff" strokeWidth="1.100" /><path d="M8 3.500h7.500V11H5" stroke="#fff" /><rect x="6" y="5" width="8" height="4.500" fill="#fff" /></Svg>
          <Svg w={17} h={14} style={{ marginRight: 10 }}><path d="M.7 5h2.500L7 1.500v11L3.200 9H.7z" stroke="#fff" strokeWidth="1.100" /><path d="M9 5q1.300 2 0 4M11 3.500q2.500 3.500 0 7" stroke="#fff" strokeWidth="1.100" /><path d="M13.500 2q3.500 5 0 10" stroke="#7b8f92" /></Svg>
          <Svg w={14} h={14} style={{ marginRight: 8 }}><path d="M1 13A12 12 0 0 1 13 2M4 13a9 9 0 0 1 9-8M7 13a6 6 0 0 1 6-5" stroke="#c6d0d2" strokeWidth="1.200" /><circle cx="11.500" cy="11.500" r="1.700" fill="#fff" /></Svg>
          <Cloudy />
          <Svg w={12} h={16} style={{ margin: "0 4px 0 10px" }}><rect x="1" y="4" width="7" height="8" rx="1.500" stroke="#fff" strokeWidth="1.200" /><path d="M8 7l3-2v6L8 9M1.500 2q4-2 8 0M1.500 14q4 2 8 0" stroke="#fff" strokeWidth="1.100" /></Svg>
          <Clock><div>7:47 AM</div><div>5/29/2023</div></Clock>
          <Svg w={26} h={26} style={{ margin: "0 11px 0 9px" }}>
            <path d="M0 3h16v12h-9l-3 3v-3H0z" fill="#fff" /><path d="M3 6h10M3 9h10M3 12h7" stroke="#0d2a30" strokeWidth="1.200" />
            <circle cx="15.500" cy="17.500" r="8.500" fill="#0b6478" stroke="#7aa3ab" />
            <text x="15.500" y="21.700" textAnchor="middle" fontSize="11.500" fontWeight="600" fontFamily="Open Sans" fill="#fff">14</text>
          </Svg>
          <BarDivider style={{ height: 40, background: "#6f8488", marginRight: 4 }} />
        </Tray>
      </Taskbar>
    </Screen>
  );
}
